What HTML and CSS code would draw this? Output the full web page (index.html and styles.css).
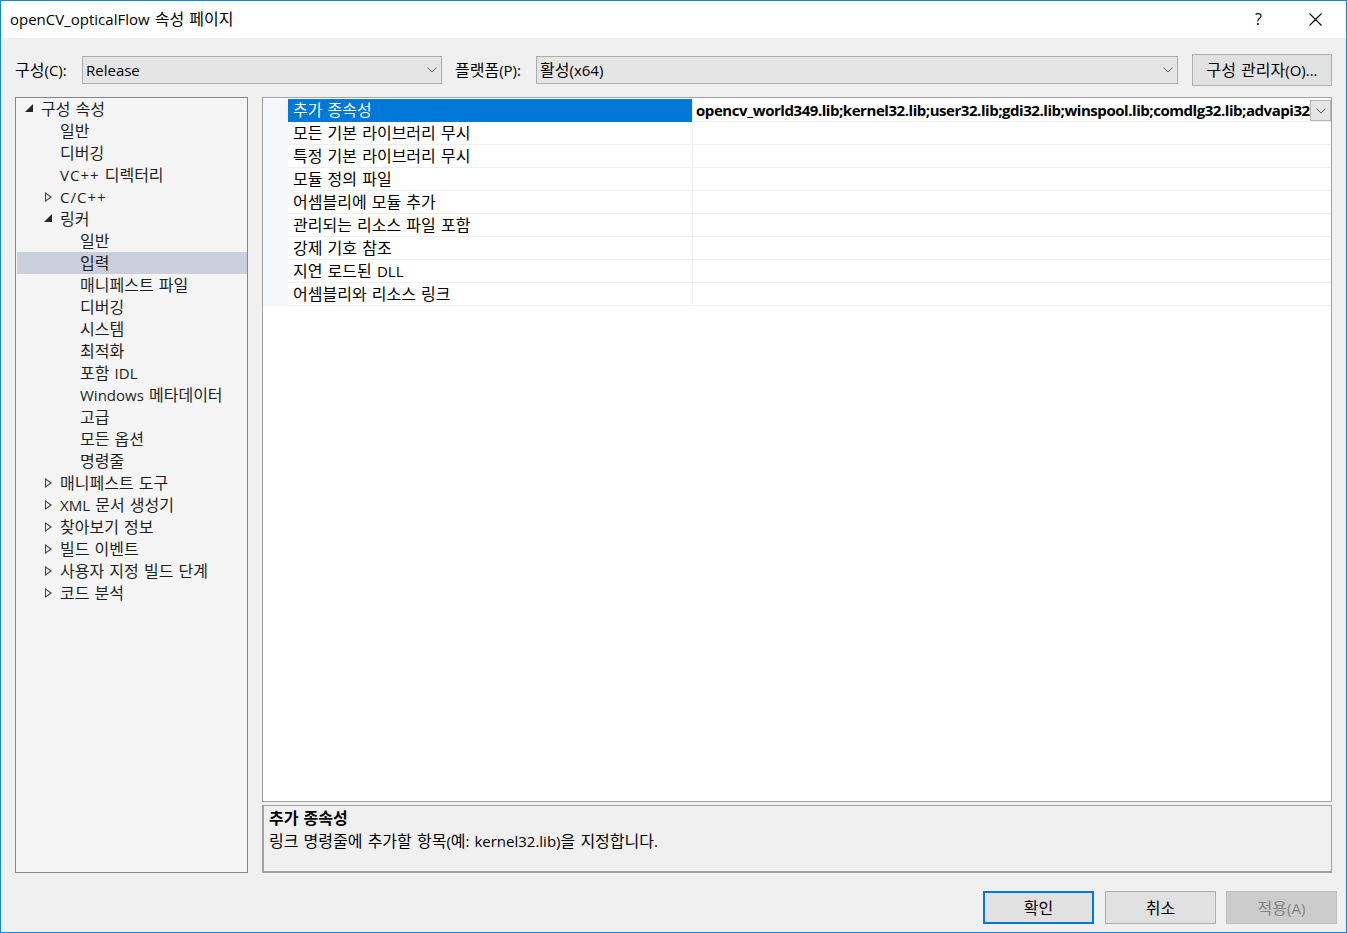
FILE: index.html
```html
<!DOCTYPE html>
<html lang="ko">
<head>
    <meta charset="UTF-8">
    <title>openCV_opticalFlow 속성 페이지</title>
    <link rel="stylesheet" href="styles.css">
</head>
<body>
<div class="window">
    <div class="titlebar">
        <span class="title"><span class="lat">openCV_opticalFlow</span> 속성 페이지</span>
        <span class="help lat">?</span>
        <span class="close">
            <svg width="13" height="13" viewBox="0 0 13 13"><path d="M0.5 0.5 L12.5 12.5 M12.5 0.5 L0.5 12.5" stroke="#000" stroke-width="1.1" fill="none"/></svg>
        </span>
    </div>

    <div class="content">
        <div class="config-row">
            <span class="cfg-label">구성<span class="lat">(C):</span></span>
            <div class="combo combo-config">
                <span class="combo-text lat">Release</span>
                <svg class="chev" width="10" height="6" viewBox="0 0 10 6"><path d="M0.5 0.5 L5 5 L9.5 0.5" fill="none" stroke="#5a5a5a"/></svg>
            </div>
            <span class="cfg-label platform-label">플랫폼<span class="lat">(P):</span></span>
            <div class="combo combo-platform">
                <span class="combo-text">활성<span class="lat">(x64)</span></span>
                <svg class="chev" width="10" height="6" viewBox="0 0 10 6"><path d="M0.5 0.5 L5 5 L9.5 0.5" fill="none" stroke="#5a5a5a"/></svg>
            </div>
            <button class="btn btn-manager">구성 관리자<span class="lat">(O)...</span></button>
        </div>

        <div class="main">
            <div class="tree">
                <div class="node lv0"><span class="exp open"></span><span>구성 속성</span></div>
                <div class="node lv1"><span class="exp"></span><span>일반</span></div>
                <div class="node lv1"><span class="exp"></span><span>디버깅</span></div>
                <div class="node lv1"><span class="exp"></span><span><span class="lat wide">VC++</span> 디렉터리</span></div>
                <div class="node lv1"><span class="exp closed"></span><span class="lat wide">C/C++</span></div>
                <div class="node lv1"><span class="exp open"></span><span>링커</span></div>
                <div class="node lv2"><span class="exp"></span><span>일반</span></div>
                <div class="node lv2 selected"><span class="exp"></span><span>입력</span></div>
                <div class="node lv2"><span class="exp"></span><span>매니페스트 파일</span></div>
                <div class="node lv2"><span class="exp"></span><span>디버깅</span></div>
                <div class="node lv2"><span class="exp"></span><span>시스템</span></div>
                <div class="node lv2"><span class="exp"></span><span>최적화</span></div>
                <div class="node lv2"><span class="exp"></span><span>포함 <span class="lat">IDL</span></span></div>
                <div class="node lv2"><span class="exp"></span><span><span class="lat">Windows</span> 메타데이터</span></div>
                <div class="node lv2"><span class="exp"></span><span>고급</span></div>
                <div class="node lv2"><span class="exp"></span><span>모든 옵션</span></div>
                <div class="node lv2"><span class="exp"></span><span>명령줄</span></div>
                <div class="node lv1"><span class="exp closed"></span><span>매니페스트 도구</span></div>
                <div class="node lv1"><span class="exp closed"></span><span><span class="lat">XML</span> 문서 생성기</span></div>
                <div class="node lv1"><span class="exp closed"></span><span>찾아보기 정보</span></div>
                <div class="node lv1"><span class="exp closed"></span><span>빌드 이벤트</span></div>
                <div class="node lv1"><span class="exp closed"></span><span>사용자 지정 빌드 단계</span></div>
                <div class="node lv1"><span class="exp closed"></span><span>코드 분석</span></div>
            </div>

            <div class="right">
                <div class="grid">
                    <div class="prop selected">
                        <div class="gutter"></div>
                        <div class="pname">추가 종속성</div>
                        <div class="pvalue">
                            <span class="pvalue-text lat">opencv_world349.lib;kernel32.lib;user32.lib;gdi32.lib;winspool.lib;comdlg32.lib;advapi32.lib;shell32.lib;ole32.lib;oleaut32.lib;uuid.lib;odbc32.lib;odbccp32.lib;%(AdditionalDependencies)</span>
                            <span class="drop">
                                <svg width="10" height="6" viewBox="0 0 10 6"><path d="M0.5 0.5 L5 5 L9.5 0.5" fill="none" stroke="#5a5a5a"/></svg>
                            </span>
                        </div>
                    </div>
                    <div class="prop"><div class="gutter"></div><div class="pname">모든 기본 라이브러리 무시</div><div class="pvalue"></div></div>
                    <div class="prop"><div class="gutter"></div><div class="pname">특정 기본 라이브러리 무시</div><div class="pvalue"></div></div>
                    <div class="prop"><div class="gutter"></div><div class="pname">모듈 정의 파일</div><div class="pvalue"></div></div>
                    <div class="prop"><div class="gutter"></div><div class="pname">어셈블리에 모듈 추가</div><div class="pvalue"></div></div>
                    <div class="prop"><div class="gutter"></div><div class="pname">관리되는 리소스 파일 포함</div><div class="pvalue"></div></div>
                    <div class="prop"><div class="gutter"></div><div class="pname">강제 기호 참조</div><div class="pvalue"></div></div>
                    <div class="prop"><div class="gutter"></div><div class="pname">지연 로드된 <span class="lat">DLL</span></div><div class="pvalue"></div></div>
                    <div class="prop"><div class="gutter"></div><div class="pname">어셈블리와 리소스 링크</div><div class="pvalue"></div></div>
                </div>
                <div class="desc">
                    <div class="desc-title">추가 종속성</div>
                    <div class="desc-text">링크 명령줄에 추가할 항목<span class="lat">(</span>예<span class="lat">: kernel32.lib)</span>을 지정합니다<span class="lat">.</span></div>
                </div>
            </div>
        </div>

        <div class="footer">
            <button class="btn btn-ok">확인</button>
            <button class="btn btn-cancel">취소</button>
            <button class="btn btn-disabled">적용<span class="lat">(A)</span></button>
        </div>
    </div>
</div>
</body>
</html>
```

FILE: styles.css
```css
* {
    box-sizing: border-box;
}
body {
    margin: 0;
    font-family: "Open Sans", "Noto Sans CJK KR", sans-serif;
    font-size: 16px;
    word-spacing: 1px;
    color: #000;
    background: #f0f0f0;
}
.lat {
    font-size: 15px;
}
.wide {
    letter-spacing: 1px;
}
.window {
    width: 1347px;
    height: 933px;
    border: 1px solid #1883d7;
    background: #f0f0f0;
    display: flex;
    flex-direction: column;
    overflow: hidden;
}

/* title bar */
.titlebar {
    height: 37px;
    flex: none;
    background: #fff;
    display: flex;
    align-items: center;
    padding-left: 9px;
}
.title {
    flex: 1;
    line-height: 20px;
    margin-top: -1px;
}
.help {
    width: 14px;
    font-size: 16px;
    line-height: 20px;
    margin-right: 40px;
    margin-top: -1px;
}
.close {
    width: 13px;
    height: 13px;
    display: flex;
    margin-right: 24px;
    margin-top: -1px;
}

.content {
    flex: 1;
    min-height: 0;
    padding: 0 14px;
}

/* config row */
.config-row {
    display: flex;
    align-items: center;
    height: 32px;
    margin-top: 16px;
}
.cfg-label {
    flex: none;
    width: 67px;
    line-height: 20px;
}
.platform-label {
    width: 81px;
    margin-left: 13px;
}
.combo {
    flex: none;
    height: 28px;
    background: #e5e5e5;
    border: 1px solid #acacac;
    display: flex;
    align-items: center;
    padding: 0 4px 0 3px;
}
.combo-config {
    width: 360px;
}
.combo-platform {
    width: 642px;
}
.combo-text {
    flex: 1;
    line-height: 20px;
}
.btn {
    font-family: inherit;
    font-size: 16px;
    word-spacing: 1px;
    color: #000;
    background: #e1e1e1;
    border: 1px solid #adadad;
    padding: 0;
    line-height: 20px;
}
.btn-manager {
    width: 140px;
    height: 32px;
    margin-left: 14px;
}

/* main area */
.main {
    display: flex;
    height: 776px;
    margin-top: 11px;
}
.tree {
    width: 233px;
    flex: none;
    background: #f5f5f5;
    border: 1px solid #828790;
    color: #1e1e1e;
}
.node {
    height: 22px;
    display: flex;
    align-items: center;
    line-height: 20px;
    white-space: nowrap;
}
.node.lv0 { padding-left: 5px; }
.node.lv1 { padding-left: 24px; }
.node.lv2 { padding-left: 44px; }
.node.selected {
    background: #cbcfdb;
    margin-left: 1px;
    padding-left: 43px;
}
.exp {
    width: 16px;
    height: 10px;
    margin-right: 4px;
    position: relative;
}
.exp.open::before {
    content: "";
    position: absolute;
    left: 4px;
    top: 0;
    border-style: solid;
    border-width: 0 0 8px 8px;
    border-color: transparent transparent #262626 transparent;
}
.exp.closed::before {
    content: "";
    position: absolute;
    left: 5px;
    top: 0;
    width: 7px;
    height: 10px;
    background: #444;
    clip-path: polygon(0 0, 100% 50%, 0 100%);
}
.exp.closed::after {
    content: "";
    position: absolute;
    left: 6px;
    top: 2px;
    width: 4px;
    height: 6px;
    background: #f5f5f5;
    clip-path: polygon(0 0, 100% 50%, 0 100%);
}

.right {
    flex: 1;
    min-width: 0;
    margin-left: 14px;
    display: flex;
    flex-direction: column;
}
.grid {
    height: 705px;
    background: #fff;
    border: 1px solid #a0a0a0;
    padding-top: 1px;
    overflow: hidden;
}
.prop {
    display: flex;
    height: 23px;
}
.gutter {
    width: 25px;
    flex: none;
    background: #f4f6fa;
}
.pname {
    width: 404px;
    flex: none;
    padding-left: 5px;
    line-height: 22px;
    border-bottom: 1px solid #f0f0f0;
    white-space: nowrap;
}
.pvalue {
    flex: 1;
    min-width: 0;
    display: flex;
    align-items: center;
    border-left: 1px solid #f0f0f0;
    border-bottom: 1px solid #f0f0f0;
    padding-left: 3px;
}
.prop.selected .pname {
    background: #0078d7;
    color: #fff;
    border-bottom-color: #0078d7;
}
.pvalue-text {
    flex: 1;
    min-width: 0;
    overflow: hidden;
    white-space: nowrap;
    font-weight: bold;
    letter-spacing: -0.45px;
    line-height: 22px;
}
.drop {
    width: 21px;
    height: 21px;
    flex: none;
    background: #e5e5e5;
    border: 1px solid #b4b4b4;
    display: flex;
    align-items: center;
    justify-content: center;
    margin-top: 1px;
}

.desc {
    height: 68px;
    margin-top: 3px;
    background: #f0f0f0;
    border: 1px solid #a0a0a0;
    border-left-width: 2px;
    border-bottom-width: 2px;
    padding: 1px 0 0 5px;
    line-height: 23px;
}
.desc-title {
    font-weight: bold;
}

/* footer */
.footer {
    display: flex;
    justify-content: flex-end;
    margin-top: 18px;
    margin-right: -5px;
}
.footer .btn {
    width: 111px;
    height: 33px;
}
.btn-cancel {
    margin: 0 10px 0 11px;
}
.btn-ok {
    border: 2px solid #0078d7;
}
.btn-disabled {
    background: #cccccc;
    border-color: #bfbfbf;
    color: #838383;
}
```
